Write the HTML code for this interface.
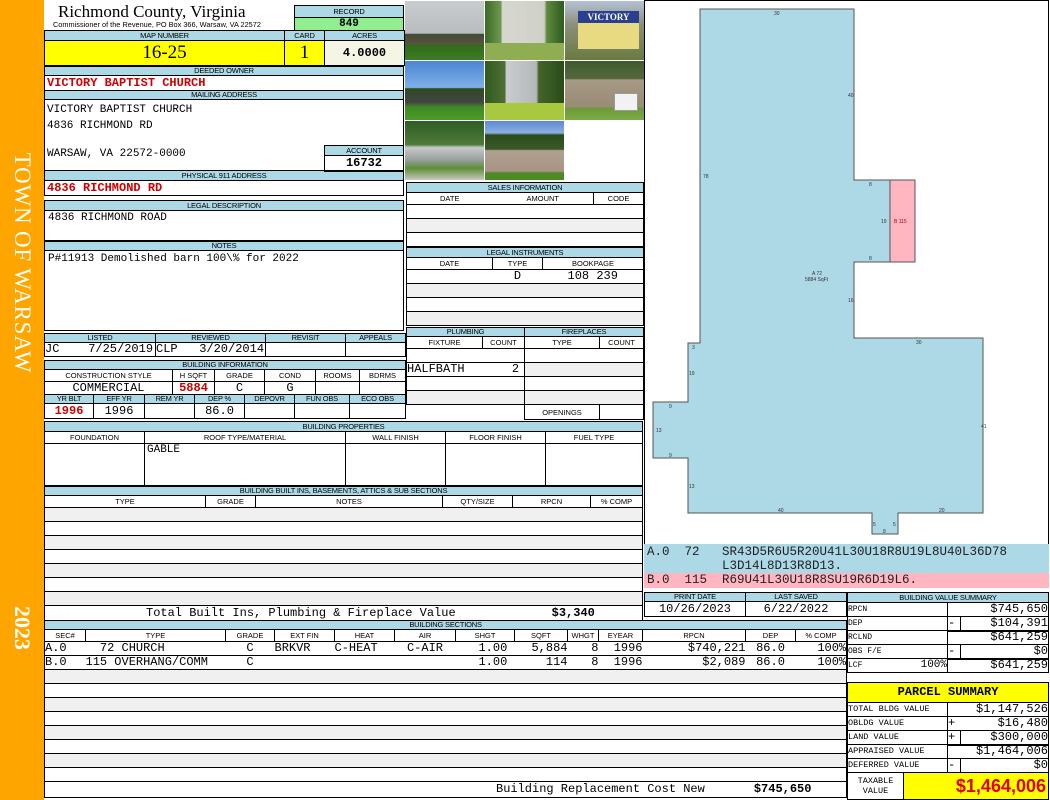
<!DOCTYPE html>
<html><head><meta charset="utf-8"><style>
*{margin:0;padding:0;box-sizing:border-box}
body{width:1050px;height:800px;position:relative;background:#fff;overflow:hidden;font-family:"Liberation Sans",sans-serif}
.a{position:absolute}
table{position:absolute;border-collapse:collapse;table-layout:fixed}
td{border:1px solid #000;padding:0;overflow:hidden;white-space:nowrap;line-height:11px}
.h td,td.h{background:#add8e6;font:7.5px/1 "Liberation Sans",sans-serif;text-align:center;letter-spacing:-0.2px}
.m{font-family:"Liberation Mono",monospace;font-size:11px}
.r{color:#d00000;font-weight:bold}
.g td{background:#f0f0f0}
.box{position:absolute;border:1px solid #000}
.ph{position:absolute;width:79px;height:59px}
</style></head><body>
<div class="a" style="left:0;top:0;width:44px;height:800px;background:#ffa500"></div>
<div class="a" style="left:22px;top:263px;transform:translate(-50%,-50%) rotate(90deg);white-space:nowrap;color:#fff;font:23px 'Liberation Serif',serif;letter-spacing:0.8px">TOWN OF WARSAW</div>
<div class="a" style="left:22px;top:628px;transform:translate(-50%,-50%) rotate(90deg);color:#fff;font:bold 22px 'Liberation Serif',serif">2023</div>

<div class="a" style="left:58px;top:2px;font:17px 'Liberation Serif',serif">Richmond County, Virginia</div>
<div class="a" style="left:53px;top:20px;font:7.5px 'Liberation Sans',sans-serif;transform:scaleX(0.98);transform-origin:left">Commissioner of the Revenue, PO Box 366, Warsaw, VA 22572</div>

<table style="left:294px;top:5px;width:110px"><tr class="h" style="height:12px"><td>RECORD</td></tr><tr style="height:13px"><td class="m" style="background:#90ee90;text-align:center;font-weight:bold;font-size:11px">849</td></tr></table>

<table style="left:44px;top:30px;width:360px">
<col style="width:240px"><col style="width:40px"><col style="width:80px">
<tr class="h" style="height:10px"><td>MAP NUMBER</td><td>CARD</td><td>ACRES</td></tr>
<tr style="height:25px;font:19px 'Liberation Serif',serif;text-align:center"><td style="background:#ffff00;line-height:20px">16-25</td><td style="background:#ffff00;line-height:20px">1</td><td class="m" style="background:#f5f5e6;font-weight:bold;font-size:12px">4.0000</td></tr></table>

<table style="left:44px;top:66px;width:360px">
<tr class="h" style="height:9px"><td>DEEDED OWNER</td></tr>
<tr style="height:15px"><td class="m r" style="font-size:12px;padding-left:2px">VICTORY BAPTIST CHURCH</td></tr>
<tr class="h" style="height:9px"><td>MAILING ADDRESS</td></tr>
<tr style="height:71px"><td></td></tr>
<tr class="h" style="height:10px"><td>PHYSICAL 911 ADDRESS</td></tr>
<tr style="height:15px"><td class="m r" style="font-size:12px;padding-left:2px">4836 RICHMOND RD</td></tr></table>
<div class="a m" style="left:47px;top:102px;line-height:16px">VICTORY BAPTIST CHURCH<br>4836 RICHMOND RD</div>
<div class="a m" style="left:47px;top:148px">WARSAW, VA 22572-0000</div>
<table style="left:324px;top:145px;width:80px"><tr class="h" style="height:10px"><td>ACCOUNT</td></tr><tr style="height:16px"><td class="m" style="text-align:center;font-weight:bold;font-size:12px">16732</td></tr></table>

<table style="left:44px;top:200px;width:360px">
<tr class="h" style="height:10px"><td>LEGAL DESCRIPTION</td></tr>
<tr style="height:30px"><td class="m" style="vertical-align:top;padding:2px 0 0 3px">4836 RICHMOND ROAD</td></tr></table>
<table style="left:44px;top:241px;width:360px">
<tr class="h" style="height:9px"><td>NOTES</td></tr>
<tr style="height:80px"><td class="m" style="vertical-align:top;padding:3px 0 0 3px">P#11913 Demolished barn 100\% for 2022</td></tr></table>

<table style="left:44px;top:333px;width:361px">
<col style="width:111px"><col style="width:110px"><col style="width:80px"><col style="width:60px">
<tr class="h" style="height:9px"><td>LISTED</td><td>REVIEWED</td><td>REVISIT</td><td>APPEALS</td></tr>
<tr class="m" style="height:14px;font-size:12px"><td>JC&nbsp;&nbsp;&nbsp;&nbsp;7/25/2019</td><td>CLP&nbsp;&nbsp;&nbsp;3/20/2014</td><td></td><td></td></tr></table>

<table style="left:44px;top:360px;width:361px">
<col style="width:128px"><col style="width:42px"><col style="width:50px"><col style="width:51px"><col style="width:44px"><col style="width:46px">
<tr class="h" style="height:9px"><td colspan="6">BUILDING INFORMATION</td></tr>
<tr style="height:11px;font:7.5px 'Liberation Sans',sans-serif;text-align:center"><td>CONSTRUCTION STYLE</td><td>H SQFT</td><td>GRADE</td><td>COND</td><td>ROOMS</td><td>BDRMS</td></tr>
<tr class="m" style="height:14px;text-align:center;font-size:12px"><td>COMMERCIAL</td><td class="r">5884</td><td>C</td><td>G</td><td></td><td></td></tr></table>
<table style="left:44px;top:394px;width:361px">
<col style="width:49px"><col style="width:51px"><col style="width:50px"><col style="width:50px"><col style="width:50px"><col style="width:55px"><col style="width:56px">
<tr class="h" style="height:9px"><td>YR BLT</td><td>EFF YR</td><td>REM YR</td><td>DEP %</td><td>DEPOVR</td><td>FUN OBS</td><td>ECO OBS</td></tr>
<tr class="m" style="height:15px;text-align:center;font-size:12px"><td class="r">1996</td><td>1996</td><td></td><td>86.0</td><td></td><td></td><td></td></tr></table>

<table style="left:44px;top:421px;width:598px">
<col style="width:100px"><col style="width:201px"><col style="width:100px"><col style="width:100px"><col style="width:97px">
<tr class="h" style="height:10px"><td colspan="5">BUILDING PROPERTIES</td></tr>
<tr style="height:10px;font:7.5px 'Liberation Sans',sans-serif;text-align:center"><td>FOUNDATION</td><td>ROOF TYPE/MATERIAL</td><td>WALL FINISH</td><td>FLOOR FINISH</td><td>FUEL TYPE</td></tr>
<tr style="height:42px;vertical-align:top"><td></td><td class="m" style="padding:1px 2px">GABLE</td><td></td><td></td><td></td></tr></table>

<table style="left:44px;top:486px;width:598px">
<col style="width:161px"><col style="width:50px"><col style="width:187px"><col style="width:70px"><col style="width:78px"><col style="width:52px">
<tr class="h" style="height:9px"><td colspan="6">BUILDING BUILT INS, BASEMENTS, ATTICS &amp; SUB SECTIONS</td></tr>
<tr style="height:11px;font:7.5px 'Liberation Sans',sans-serif;text-align:center"><td>TYPE</td><td>GRADE</td><td>NOTES</td><td>QTY/SIZE</td><td>RPCN</td><td>% COMP</td></tr>
<tr class="g" style="height:14px"><td colspan="6"></td></tr><tr style="height:14px"><td colspan="6"></td></tr>
<tr class="g" style="height:14px"><td colspan="6"></td></tr><tr style="height:14px"><td colspan="6"></td></tr>
<tr class="g" style="height:14px"><td colspan="6"></td></tr><tr style="height:14px"><td colspan="6"></td></tr>
<tr class="g" style="height:14px"><td colspan="6"></td></tr>
<tr class="m" style="height:15px;font-size:12px"><td colspan="6"><span style="position:relative;left:101px">Total Built Ins, Plumbing &amp; Fireplace Value</span><b style="position:relative;left:197px">$3,340</b></td></tr></table>

<!-- photos -->
<div class="ph" style="left:405px;top:1px;background:linear-gradient(#c9ccce 0,#b9bcbf 55%,#3f4a36 56%,#59533e 72%,#2f6d1c 76%,#3c7a22 100%)"></div>
<div class="ph" style="left:485px;top:1px;background:linear-gradient(90deg,#3b6b26,#6f9850 20%,#d7d7d0 22%,#cfd0c8 75%,#5d8a40 78%,#2f5a1e);"></div>
<div class="ph" style="left:485px;top:43px;height:17px;background:#8fae54"></div>
<div class="ph" style="left:565px;top:1px;background:linear-gradient(#b4c2d6,#8b8f7a 40%,#6a7a40)"></div>
<div class="a" style="left:578px;top:11px;width:61px;height:38px;background:#e8da80;border-top:12px solid #2b3f8f;font:bold 9px 'Liberation Serif',serif;color:#fff;text-align:center;line-height:0"><span style="position:relative;top:-6px">VICTORY</span></div>
<div class="ph" style="left:405px;top:61px;background:linear-gradient(#4a86d2 0,#7fb0e6 45%,#2d4a20 47%,#444 70%,#3e8a23 78%,#4c9a2a 100%)"></div>
<div class="ph" style="left:485px;top:61px;background:linear-gradient(90deg,#2f5a1e 0,#4e6f35 25%,#c9ccd0 27%,#b5b8b8 65%,#43652c 68%,#2a4b18);"></div>
<div class="ph" style="left:485px;top:103px;height:17px;background:#a8c840"></div>
<div class="ph" style="left:565px;top:61px;background:linear-gradient(#3f5a30 0,#55683c 30%,#a69a86 32%,#998b74 78%,#6c9a3a 80%,#7caa44)"></div>
<div class="a" style="left:614px;top:93px;width:24px;height:18px;background:#f2f2f2;border:1px solid #999"></div>
<div class="ph" style="left:405px;top:121px;background:linear-gradient(#2d5c24 0,#4f7a3a 40%,#c9c9c9 45%,#9aa0a0 65%,#5d8d3a 80%,#c8c8c0 100%)"></div>
<div class="ph" style="left:485px;top:121px;background:linear-gradient(#5c8ad0 0,#8ab0e0 20%,#2a4a1c 24%,#3a5a28 48%,#b0a090 50%,#a89484 85%,#4d8a26 88%,#4d8a26)"></div>

<table style="left:406px;top:182px;width:237px">
<col style="width:86px"><col style="width:101px"><col style="width:50px">
<tr class="h" style="height:10px"><td colspan="3">SALES INFORMATION</td></tr>
<tr style="height:10px;font:7.5px 'Liberation Sans',sans-serif;text-align:center"><td style="border-right:0">DATE</td><td style="border-left:0">AMOUNT</td><td>CODE</td></tr>
<tr style="height:14px"><td colspan="3"></td></tr><tr class="g" style="height:14px"><td colspan="3"></td></tr><tr style="height:14px"><td colspan="3"></td></tr></table>

<table style="left:406px;top:247px;width:237px">
<col style="width:86px"><col style="width:50px"><col style="width:101px">
<tr class="h" style="height:10px"><td colspan="3">LEGAL INSTRUMENTS</td></tr>
<tr style="height:10px;font:7.5px 'Liberation Sans',sans-serif;text-align:center"><td>DATE</td><td>TYPE</td><td>BOOKPAGE</td></tr>
<tr class="m" style="height:14px;text-align:center;font-size:12px"><td style="border-right:0"></td><td style="border:0;border-bottom:1px solid #000">D</td><td style="border-left:0">108 239</td></tr>
<tr class="g" style="height:14px"><td colspan="3"></td></tr><tr style="height:14px"><td colspan="3"></td></tr><tr class="g" style="height:14px"><td colspan="3"></td></tr></table>

<table style="left:406px;top:327px;width:118px">
<col style="width:76px"><col style="width:42px">
<tr class="h" style="height:9px"><td colspan="2">PLUMBING</td></tr>
<tr style="height:11px;font:7.5px 'Liberation Sans',sans-serif;text-align:center"><td>FIXTURE</td><td>COUNT</td></tr>
<tr style="height:14px"><td colspan="2"></td></tr>
<tr class="m" style="height:14px;font-size:12px"><td style="border-right:0">HALFBATH</td><td style="border-left:0;text-align:right;padding-right:5px">2</td></tr>
<tr style="height:14px"><td colspan="2"></td></tr><tr class="g" style="height:14px"><td colspan="2"></td></tr></table>
<table style="left:524px;top:327px;width:119px">
<col style="width:75px"><col style="width:44px">
<tr class="h" style="height:9px"><td colspan="2">FIREPLACES</td></tr>
<tr style="height:11px;font:7.5px 'Liberation Sans',sans-serif;text-align:center"><td>TYPE</td><td>COUNT</td></tr>
<tr style="height:14px"><td colspan="2"></td></tr><tr class="g" style="height:14px"><td colspan="2"></td></tr>
<tr style="height:14px"><td colspan="2"></td></tr><tr class="g" style="height:14px"><td colspan="2"></td></tr>
<tr style="height:15px;font:7.5px 'Liberation Sans',sans-serif;text-align:center"><td>OPENINGS</td><td></td></tr></table>

<!-- sketch -->
<div class="box" style="left:644px;top:0;width:405px;height:545px"></div>
<svg class="a" style="left:0;top:0" width="1050" height="545">
<polygon points="700,9 854,9 854,180 890,180 890,262 854,262 854,338 983,338 983,513 898,513 898,534 872,534 872,513 688,513 688,458 653,458 653,402 688,402 688,343 700,343" fill="#add8e6" stroke="#555" stroke-width="1"/>
<rect x="890" y="180" width="25" height="82" fill="#ffb6c1" stroke="#555"/>
<g font-family="Liberation Sans" font-size="5" fill="#333">
<text x="774" y="15">30</text><text x="848" y="97">40</text><text x="703" y="178">78</text><text x="869" y="186">8</text><text x="881" y="223">19</text><text x="894" y="223" fill="#a00">B 115</text><text x="869" y="260">8</text><text x="812" y="275">A 72</text><text x="805" y="281">5884 SqFt</text><text x="848" y="302">16</text><text x="916" y="344">30</text><text x="692" y="349">3</text><text x="689" y="375">19</text><text x="669" y="408">9</text><text x="656" y="432">13</text><text x="669" y="457">9</text><text x="689" y="488">13</text><text x="778" y="512">40</text><text x="939" y="512">20</text><text x="981" y="428">41</text><text x="873" y="526">5</text><text x="893" y="526">5</text><text x="883" y="533">8</text>
</g></svg>
<div class="a m" style="left:644px;top:544px;width:405px;height:29px;background:#add8e6;font-size:12.5px;line-height:14px;padding:1px 3px;white-space:pre;color:#222">A.0  72   SR43D5R6U5R20U41L30U18R8U19L8U40L36D78
          L3D14L8D13R8D13.</div>
<div class="a m" style="left:644px;top:573px;width:405px;height:15px;background:#ffb6c1;font-size:12.5px;line-height:14px;padding:0 3px;white-space:pre;color:#222">B.0  115  R69U41L30U18R8SU19R6D19L6.</div>

<table style="left:644px;top:592px;width:202px">
<col style="width:101px"><col style="width:101px">
<tr class="h" style="height:9px"><td>PRINT DATE</td><td>LAST SAVED</td></tr>
<tr class="m" style="height:15px;text-align:center;font-size:12px"><td>10/26/2023</td><td>6/22/2022</td></tr></table>

<table style="left:847px;top:592px;width:201px">
<col style="width:100px"><col style="width:13px"><col style="width:88px">
<tr class="h" style="height:10px"><td colspan="3">BUILDING VALUE SUMMARY</td></tr>
<tr class="m" style="height:14px;font-size:12px"><td style="font-size:8px">RPCN</td><td style="border-right:0"></td><td style="border-left:0;text-align:right">$745,650</td></tr>
<tr class="m" style="height:14px;font-size:12px"><td style="font-size:8px">DEP</td><td style="border-bottom:2px solid #000">-</td><td style="text-align:right;border-bottom:2px solid #000">$104,391</td></tr>
<tr class="m" style="height:14px;font-size:12px"><td style="font-size:8px">RCLND</td><td style="border-right:0"></td><td style="border-left:0;text-align:right">$641,259</td></tr>
<tr class="m" style="height:14px;font-size:12px"><td style="font-size:8px">OBS F/E</td><td style="border-bottom:2px solid #000">-</td><td style="text-align:right;border-bottom:2px solid #000">$0</td></tr>
<tr class="m" style="height:14px;font-size:12px"><td style="font-size:8px">LCF<span style="float:right;font-size:11px">100%</span></td><td style="border-right:0"></td><td style="border-left:0;text-align:right">$641,259</td></tr></table>

<table style="left:847px;top:682px;width:201px">
<col style="width:100px"><col style="width:13px"><col style="width:88px">
<tr style="height:20px"><td colspan="3" class="m" style="background:#ffff00;text-align:center;font-weight:bold;font-size:12px">PARCEL SUMMARY</td></tr>
<tr class="m" style="height:14px;font-size:12px"><td style="font-size:8.5px">TOTAL BLDG VALUE</td><td style="border-right:0"></td><td style="border-left:0;text-align:right">$1,147,526</td></tr>
<tr class="m" style="height:14px;font-size:12px"><td style="font-size:8.5px">OBLDG VALUE</td><td style="border-right:0">+</td><td style="border-left:0;text-align:right">$16,480</td></tr>
<tr class="m" style="height:14px;font-size:12px"><td style="font-size:8.5px">LAND VALUE</td><td style="border-bottom:2px solid #000">+</td><td style="text-align:right;border-bottom:2px solid #000">$300,000</td></tr>
<tr class="m" style="height:14px;font-size:12px"><td style="font-size:8.5px">APPRAISED VALUE</td><td style="border-right:0"></td><td style="border-left:0;text-align:right">$1,464,006</td></tr>
<tr class="m" style="height:14px;font-size:12px"><td style="font-size:8.5px">DEFERRED VALUE</td><td>-</td><td style="text-align:right">$0</td></tr></table>
<table style="left:847px;top:772px;width:201px">
<col style="width:56px"><col style="width:145px">
<tr style="height:27px"><td class="m" style="font-size:8.5px;text-align:center;line-height:10px">TAXABLE<br>VALUE</td><td style="background:#ffff00;color:#e00000;font:bold 18px/20px 'Liberation Sans',sans-serif;text-align:right;padding-right:2px">$1,464,006</td></tr></table>

<table style="left:44px;top:620px;width:802px">
<col style="width:41px"><col style="width:140px"><col style="width:49px"><col style="width:60px"><col style="width:60px"><col style="width:61px"><col style="width:59px"><col style="width:53px"><col style="width:31px"><col style="width:44px"><col style="width:103px"><col style="width:50px"><col style="width:51px">
<tr class="h" style="height:9px"><td colspan="13">BUILDING SECTIONS</td></tr>
<tr style="height:11px;font:7.5px 'Liberation Sans',sans-serif;text-align:center"><td>SEC#</td><td>TYPE</td><td>GRADE</td><td>EXT FIN</td><td>HEAT</td><td>AIR</td><td>SHGT</td><td>SQFT</td><td>WHGT</td><td>EYEAR</td><td>RPCN</td><td>DEP</td><td>% COMP</td></tr>
<tr class="m" style="height:14px;font-size:12px"><td style="border-right:0">A.0</td><td style="border:0;border-bottom:1px solid #000">&nbsp;&nbsp;72 CHURCH</td><td style="border:0;border-bottom:1px solid #000;text-align:center">C</td><td style="border:0;border-bottom:1px solid #000">BRKVR</td><td style="border:0;border-bottom:1px solid #000">C-HEAT</td><td style="border:0;border-bottom:1px solid #000;text-align:center">C-AIR</td><td style="border:0;border-bottom:1px solid #000;text-align:right">1.00&nbsp;</td><td style="border:0;border-bottom:1px solid #000;text-align:right">5,884</td><td style="border:0;border-bottom:1px solid #000;text-align:right">8</td><td style="border:0;border-bottom:1px solid #000;text-align:right">1996</td><td style="border:0;border-bottom:1px solid #000;text-align:right">$740,221</td><td style="border:0;border-bottom:1px solid #000;text-align:center">86.0</td><td style="border-left:0;text-align:right">100%</td></tr>
<tr class="m" style="height:14px;font-size:12px"><td style="border-right:0">B.0</td><td style="border:0;border-bottom:1px solid #000">115 OVERHANG/COMM</td><td style="border:0;border-bottom:1px solid #000;text-align:center">C</td><td style="border:0;border-bottom:1px solid #000"></td><td style="border:0;border-bottom:1px solid #000"></td><td style="border:0;border-bottom:1px solid #000"></td><td style="border:0;border-bottom:1px solid #000;text-align:right">1.00&nbsp;</td><td style="border:0;border-bottom:1px solid #000;text-align:right">114</td><td style="border:0;border-bottom:1px solid #000;text-align:right">8</td><td style="border:0;border-bottom:1px solid #000;text-align:right">1996</td><td style="border:0;border-bottom:1px solid #000;text-align:right">$2,089</td><td style="border:0;border-bottom:1px solid #000;text-align:center">86.0</td><td style="border-left:0;text-align:right">100%</td></tr>
<tr class="g" style="height:14px"><td colspan="13"></td></tr><tr style="height:14px"><td colspan="13"></td></tr>
<tr class="g" style="height:14px"><td colspan="13"></td></tr><tr style="height:14px"><td colspan="13"></td></tr>
<tr class="g" style="height:14px"><td colspan="13"></td></tr><tr style="height:14px"><td colspan="13"></td></tr>
<tr class="g" style="height:14px"><td colspan="13"></td></tr><tr style="height:14px"><td colspan="13"></td></tr>
<tr class="m" style="height:16px;font-size:12px"><td colspan="13"><span style="position:relative;left:451px">Building Replacement Cost New</span><b style="position:relative;left:500px">$745,650</b></td></tr></table>
</body></html>
